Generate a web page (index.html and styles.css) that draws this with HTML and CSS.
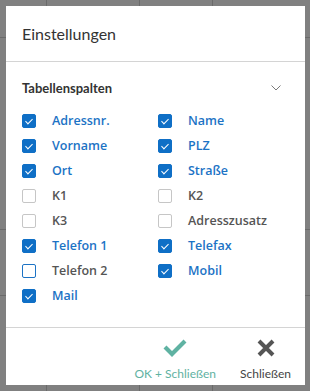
FILE: index.html
```html
<!DOCTYPE html>
<html lang="de">
<head>
<meta charset="utf-8">
<title>Einstellungen</title>
<link rel="stylesheet" href="styles.css">
</head>
<body>
<div class="backdrop"></div>
<div class="modal">
  <div class="modal-header">
    <h1 class="modal-title">Einstellungen</h1>
  </div>
  <div class="modal-body">
    <div class="section-head">
      <span class="section-title">Tabellenspalten</span>
      <svg class="chevron" width="10" height="6" viewBox="0 0 10 6"><path d="M0.5 0.5 L5 5 L9.5 0.5" fill="none" stroke="#7a7a7a" stroke-width="1"/></svg>
    </div>
    <div class="columns">
      <label class="opt on"><span class="box"></span>Adressnr.</label>
      <label class="opt on"><span class="box"></span>Name</label>
      <label class="opt on"><span class="box"></span>Vorname</label>
      <label class="opt on"><span class="box"></span>PLZ</label>
      <label class="opt on"><span class="box"></span>Ort</label>
      <label class="opt on"><span class="box"></span>Straße</label>
      <label class="opt"><span class="box"></span>K1</label>
      <label class="opt"><span class="box"></span>K2</label>
      <label class="opt"><span class="box"></span>K3</label>
      <label class="opt"><span class="box"></span>Adresszusatz</label>
      <label class="opt on"><span class="box"></span>Telefon 1</label>
      <label class="opt on"><span class="box"></span>Telefax</label>
      <label class="opt focus"><span class="box"></span>Telefon 2</label>
      <label class="opt on"><span class="box"></span>Mobil</label>
      <label class="opt on"><span class="box"></span>Mail</label>
    </div>
  </div>
  <div class="modal-footer">
    <button class="btn btn-ok">
      <svg width="26" height="20" viewBox="0 0 26 20"><path d="M3 10 L10 17 L23 4" fill="none" stroke="#5fb2a2" stroke-width="4.2"/></svg>
      <span>OK + Schließen</span>
    </button>
    <button class="btn btn-close">
      <svg width="18" height="18" viewBox="0 0 18 18"><path d="M2 2 L16 16 M16 2 L2 16" fill="none" stroke="#555" stroke-width="4"/></svg>
      <span>Schließen</span>
    </button>
  </div>
</div>
</body>
</html>
```

FILE: styles.css
```css
html, body {
  margin: 0;
  padding: 0;
}
body {
  width: 310px;
  height: 391px;
  background: #808080;
  position: relative;
  overflow: hidden;
  font-family: Lato, "Noto Sans", sans-serif;
}
.backdrop {
  position: absolute;
  inset: 0;
  background:
    linear-gradient(#6a6a6a, #6a6a6a) 0 37px / 100% 1px no-repeat,
    linear-gradient(#6a6a6a, #6a6a6a) 0 229px / 100% 1px no-repeat,
    linear-gradient(#6a6a6a, #6a6a6a) 0 295px / 100% 1px no-repeat,
    linear-gradient(#6a6a6a, #6a6a6a) 46px 0 / 1px 100% no-repeat,
    linear-gradient(#6a6a6a, #6a6a6a) 139px 0 / 1px 100% no-repeat,
    linear-gradient(#6a6a6a, #6a6a6a) 212px 0 / 1px 100% no-repeat;
}
.modal {
  position: absolute;
  left: 6px;
  top: 6px;
  width: 299px;
  height: 379px;
  background: #fff;
  display: flex;
  flex-direction: column;
}
.modal-header {
  height: 55px;
  border-bottom: 1px solid #d4d4d4;
  padding: 0 16px;
  display: flex;
  align-items: center;
}
.modal-title {
  margin: 0;
  font-size: 16px;
  font-weight: 400;
  color: #333;
}
.modal-body {
  flex: 1;
  padding: 0 16px;
}
.section-head {
  height: 50px;
  display: flex;
  align-items: center;
  justify-content: space-between;
  padding-right: 8px;
  padding-top: 1px;
  box-sizing: border-box;
}
.section-title {
  font-size: 13px;
  font-weight: 700;
  color: #333;
}
.chevron {
  display: block;
}
.columns {
  display: grid;
  grid-template-columns: 136px 1fr;
  grid-auto-rows: 25px;
  margin-top: 2px;
}
.opt {
  display: flex;
  align-items: flex-start;
  gap: 16px;
  font-family: "Open Sans", "Noto Sans", sans-serif;
  font-size: 12.5px;
  font-weight: 600;
  color: #555;
  line-height: 14px;
}
.opt.on {
  color: #1c73c5;
}
.box {
  width: 14px;
  height: 14px;
  box-sizing: border-box;
  border: 1px solid #c6c6c6;
  border-radius: 2px;
  background: #fff;
  flex: none;
  position: relative;
}
.opt.focus .box {
  border-color: #1c73c5;
}
.opt.on .box {
  background: #0f6fc6;
  border-color: #0f6fc6;
}
.opt.on .box::after {
  content: "";
  position: absolute;
  left: 4px;
  top: 2px;
  width: 3px;
  height: 6px;
  border: solid #fff;
  border-width: 0 1px 1px 0;
  transform: rotate(45deg);
}
.modal-footer {
  height: 57px;
  border-top: 1px solid #d4d4d4;
  display: flex;
  justify-content: flex-end;
  align-items: stretch;
  gap: 24px;
  padding-right: 14px;
}
.btn {
  border: 0;
  background: none;
  padding: 0;
  margin: 0;
  font-family: inherit;
  font-size: 12px;
  display: flex;
  flex-direction: column;
  align-items: center;
  justify-content: flex-end;
  padding-bottom: 4px;
  gap: 9px;
}
.btn-ok {
  color: #5fb2a2;
}
.btn-close {
  color: #444;
}
```
